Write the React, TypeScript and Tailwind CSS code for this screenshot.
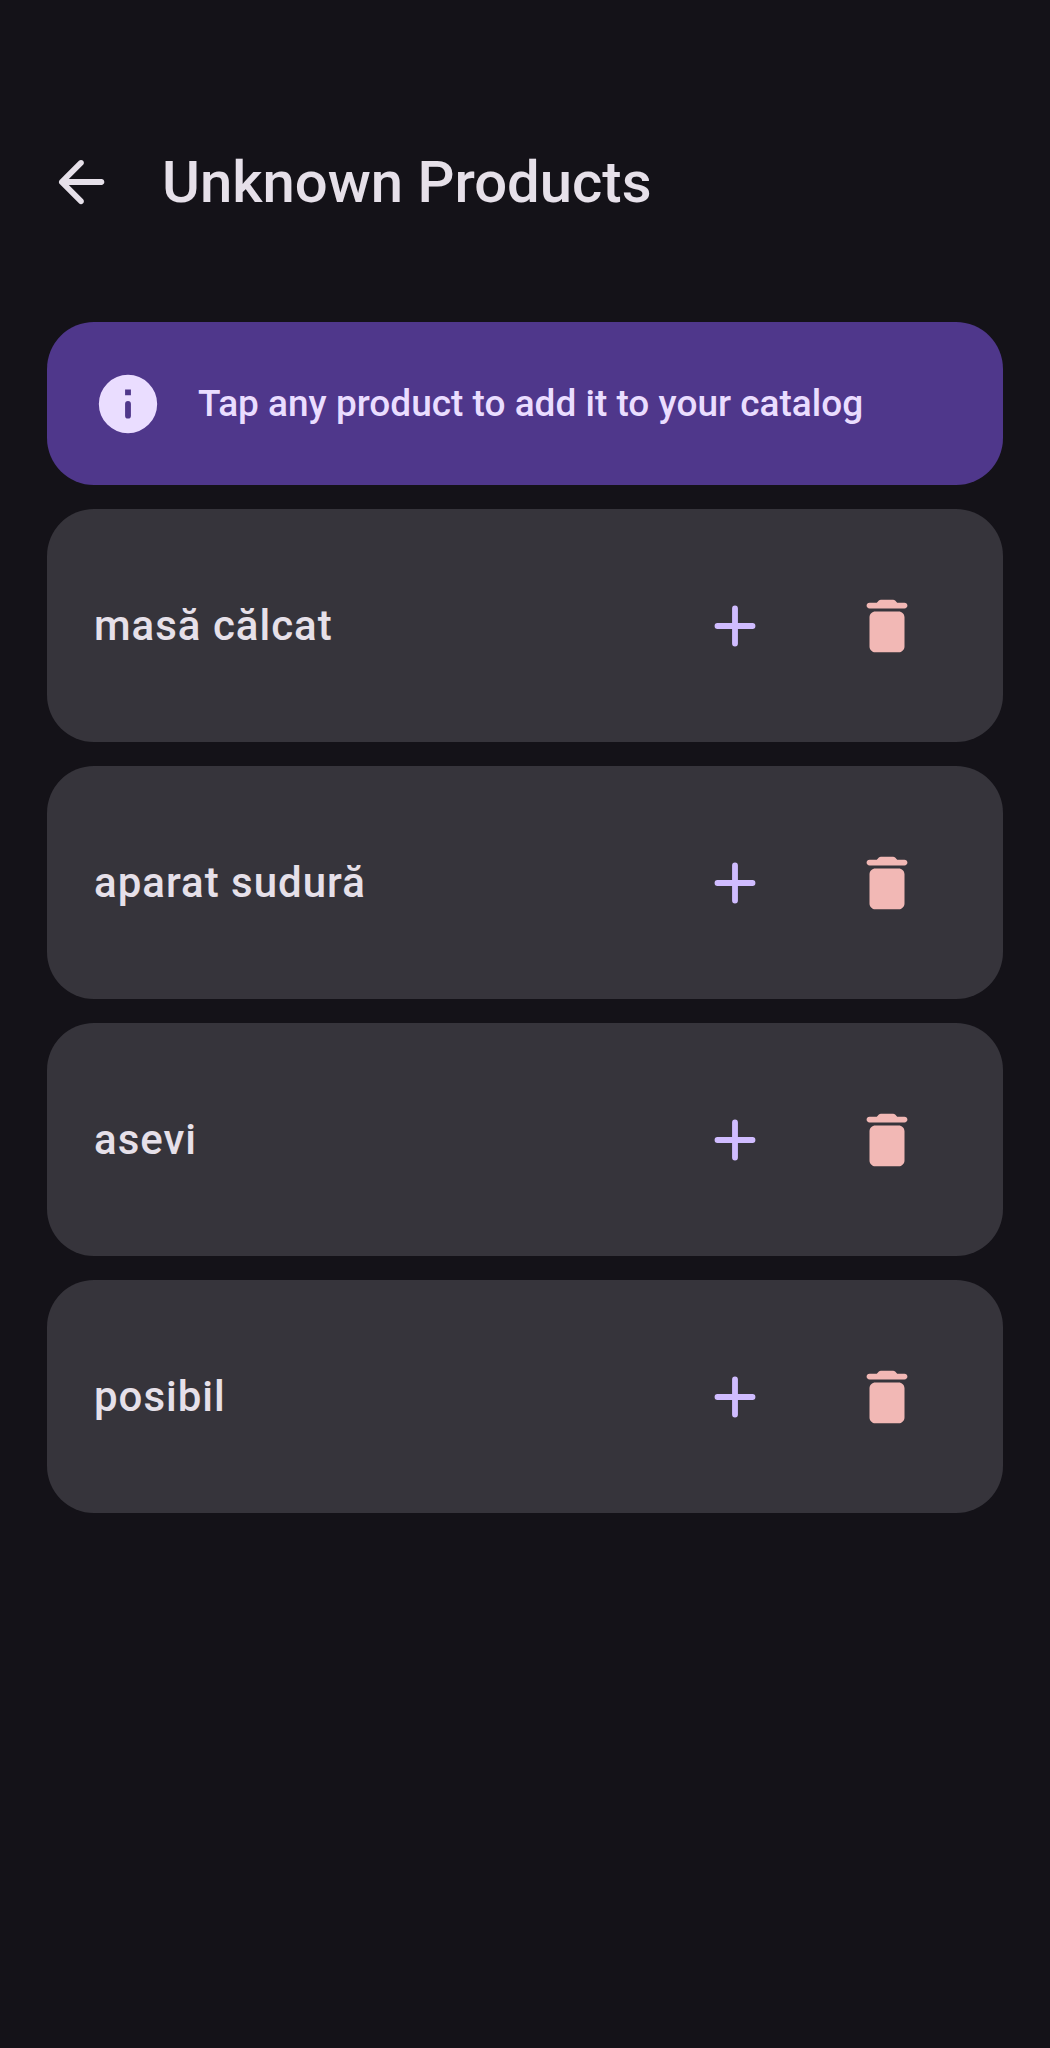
const products = ["masă călcat", "aparat sudură", "asevi", "posibil"];

function BackIcon() {
  return (
    <svg viewBox="0 0 24 24" className="size-[70px]" fill="currentColor" aria-hidden="true">
      <path d="M19 11H7.830l4.880-4.880c.39-.39.39-1.020 0-1.410-.39-.39-1.020-.39-1.410 0l-6.590 6.590c-.39.39-.39 1.020 0 1.410l6.590 6.590c.39.39 1.020.39 1.410 0 .39-.39.39-1.020 0-1.410L7.830 13H19c.55 0 1-.45 1-1s-.45-1-1-1z" />
    </svg>
  );
}

function InfoIcon() {
  return (
    <svg viewBox="0 0 24 24" className="size-[70px] shrink-0" fill="currentColor" aria-hidden="true">
      <path fillRule="evenodd" d="M12 2a10 10 0 1 0 0 20a10 10 0 0 0 0-20zM12 17a1 1 0 0 1-1-1v-4a1 1 0 0 1 2 0v4a1 1 0 0 1-1 1zM11 7h2v2h-2z" />
    </svg>
  );
}

function PlusIcon() {
  return (
    <svg viewBox="0 0 24 24" className="size-[70px]" fill="none" stroke="currentColor" strokeWidth="2" strokeLinecap="round" aria-hidden="true">
      <path d="M12 6v12M6 12h12" />
    </svg>
  );
}

function TrashIcon() {
  return (
    <svg viewBox="0 0 24 24" className="size-[70px]" fill="currentColor" aria-hidden="true">
      <path d="M6 19c0 1.1.9 2 2 2h8c1.1 0 2-.9 2-2V9c0-1.100-.9-2-2-2H8c-1.100 0-2 .9-2 2v10zM18 4h-2.500l-.71-.71c-.18-.18-.44-.29-.7-.29H9.910c-.26 0-.52.11-.7.29L8.500 4H6c-.55 0-1 .45-1 1s.45 1 1 1h12c.55 0 1-.45 1-1s-.45-1-1-1z" />
    </svg>
  );
}

export default function App() {
  return (
    <div className="min-h-screen bg-[#141218] pt-[134px] font-[Roboto,sans-serif] font-medium text-[#e6e0e9]">
      <header className="flex items-center gap-[46px] px-[46px]">
        <button type="button" aria-label="Back" className="size-[70px]">
          <BackIcon />
        </button>
        <h1 className="text-[58px] leading-[96px]">Unknown Products</h1>
      </header>
      <main className="mt-23 flex flex-col gap-6 px-[47px]">
        <section className="flex min-h-[163px] items-center gap-[35px] rounded-[47px] bg-[#4f378b] px-[46px] py-10 text-[#eaddff]">
          <InfoIcon />
          <p className="text-[37px]">Tap any product to add it to your catalog</p>
        </section>
        <ul className="flex flex-col gap-6">
          {products.map((name) => (
            <li key={name} className="flex min-h-[233px] items-center rounded-[47px] bg-[#36343b] pr-[46px] pl-[47px]">
              <span className="flex-1 text-[42px] tracking-[1px]">{name}</span>
              <button type="button" aria-label={`Add ${name}`} className="flex size-[140px] items-center justify-center text-[#d0bcff]">
                <PlusIcon />
              </button>
              <button type="button" aria-label={`Delete ${name}`} className="ml-3 flex size-[140px] items-center justify-center text-[#f2b8b5]">
                <TrashIcon />
              </button>
            </li>
          ))}
        </ul>
      </main>
    </div>
  );
}
